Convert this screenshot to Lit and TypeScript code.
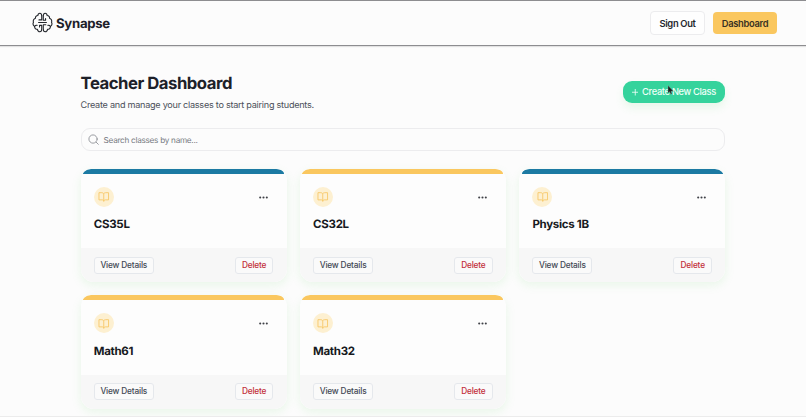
import { LitElement, html, css, svg } from "lit";
import { customElement, property } from "lit/decorators.js";
import { classMap } from "lit/directives/class-map.js";

const brain = svg`
  <path d="M11.100 4.300C11 2.600 10.300 1.500 9 1.500S6.800 2.600 6.700 4C4.800 4 3.700 5.400 4 7.200C2 7.800 1 9.700 1.700 11.800C.8 13.600 1.400 15.600 3 16.500C2.900 18.400 4.200 19.800 6.200 19.800C6.500 21.500 7.600 22.500 9 22.500S11.100 21.300 11.100 19.400V15.300H8.600V17"/>
  <path d="M12.900 4.300C13 2.600 13.700 1.500 15 1.500S17.200 2.600 17.300 4C19.200 4 20.300 5.400 20 7.200C22 7.800 23 9.700 22.300 11.800C23.200 13.600 22.600 15.600 21 16.500C21.100 18.400 19.800 19.800 17.800 19.800C17.500 21.500 16.400 22.500 15 22.500S12.900 21.300 12.900 19.400V14.500H15.800"/>
  <path d="M11.100 4.300V9H8M12.900 4.300V9.500H15.500V7.500M7.500 12H16.500M3 16.500C3.600 15.400 4.700 15 5.800 15.300M21 16.500C20.400 15.400 19.300 15 18.200 15.300"/>`;

@customElement("class-card")
export class ClassCard extends LitElement {
  @property() name = "";
  @property() tone = "gold";

  static styles = css`
    :host { display: block; text-rendering: geometricPrecision; }
    .card {
      height: 113.300px; border-radius: 10px 10px 13px 13px; overflow: hidden; background: #fdfdfd;
      display: flex; flex-direction: column; box-sizing: border-box;
    }
    .shadow { border-radius: 13px; box-shadow: 0 3px 8px 1px rgba(125, 215, 125, 0.130); }
    .bar { height: 4.600px; flex: none; margin: 0 2.600px; border-radius: 8px 8px 0 0 / 4.600px 4.600px 0 0; background: #fac75f; }
    .bar.blue { background: #1c7aa3; }
    .body { flex: 1; padding: 13.300px 13.200px 0; }
    .top { display: flex; justify-content: space-between; align-items: center; height: 20px; padding-right: 5.800px; }
    .badge { width: 20px; height: 20px; border-radius: 50%; background: #fdf0d1; display: grid; place-items: center; }
    .badge svg { width: 11.500px; height: 11.500px; fill: none; stroke: #f7c869; stroke-width: 1.900; }
    .dots { width: 9px; height: 3px; margin-top: 1px; fill: #3f4147; }
    .name { margin: 9.400px 0 0; font-size: 11.500px; line-height: 16px; font-weight: 700; letter-spacing: -0.300px; color: #171a22; white-space: nowrap; }
    .foot {
      height: 34px; flex: none; box-sizing: border-box; padding: 0 13.200px; background: #f7f7f7;
      display: flex; align-items: center; justify-content: space-between;
    }
    .btn {
      height: 17px; box-sizing: border-box; border: 1px solid #e5e8ec; border-radius: 3px; background: #fafafa;
      font: 500 8.300px/15px Inter, sans-serif; letter-spacing: -0.180px; color: #434955; padding: 0; text-align: center; white-space: nowrap;
    }
    .view { width: 60px; }
    .del { width: 38.500px; color: #c2303a; }
  `;

  render() {
    return html`<div class="shadow"><article class="card">
      <div class=${classMap({ bar: true, blue: this.tone === "blue" })}></div>
      <div class="body">
        <div class="top">
          <span class="badge"><svg viewBox="0 0 24 24"><path d="M12 5.500C11 4.400 9.800 3.500 8 3.500H2V18.500H8.500C10.500 18.500 12 19.500 12 21.500C12 19.500 13.500 18.500 15.500 18.500H22V3.500H16C14.200 3.500 13 4.400 12 5.500V21.500"/></svg></span>
          <svg class="dots" viewBox="0 0 9 3"><circle cx="1.200" cy="1.500" r="1.050"/><circle cx="4.500" cy="1.500" r="1.050"/><circle cx="7.800" cy="1.500" r="1.050"/></svg>
        </div>
        <h2 class="name">${this.name}</h2>
      </div>
      <div class="foot"><button class="btn view">View Details</button><button class="btn del">Delete</button></div>
    </article></div>`;
  }
}

@customElement("app-root")
export class AppRoot extends LitElement {
  private classes = [
    { name: "CS35L", tone: "blue" },
    { name: "CS32L", tone: "gold" },
    { name: "Physics 1B", tone: "blue" },
    { name: "Math61", tone: "gold" },
    { name: "Math32", tone: "gold" },
  ];

  static styles = css`
    :host {
      display: block; position: relative; box-sizing: border-box; height: 417px; overflow: hidden;
      background: #fcfcfc; font-family: Inter, sans-serif; color: #1d2129; text-rendering: geometricPrecision;
    }
    .edge { position: absolute; left: 0; right: 0; bottom: 0; height: 1px; background: #ececec; }
    header {
      height: 46px; box-sizing: border-box; border-top: 1px solid #8d8d90; border-bottom: 1px solid #8d8d90;
      box-shadow: 0 1px 1px rgba(0, 0, 0, 0.100); padding: 0 29px 0 32px;
      display: flex; align-items: center; justify-content: space-between;
    }
    .brand { display: flex; align-items: center; gap: 3px; font-size: 13.200px; font-weight: 700; letter-spacing: -0.300px; }
    .brand span { padding-top: 1.500px; }
    .brand svg { width: 21px; height: 21px; margin-top: -1px; fill: none; stroke: #24272d; stroke-width: 1.250; stroke-linecap: round; stroke-linejoin: round; }
    .nav { display: flex; gap: 8px; align-items: center; }
    .nav button { font: 600 9.400px/20px Inter, sans-serif; letter-spacing: -0.350px; color: #24272d; padding: 1px 0 0; box-sizing: border-box; white-space: nowrap; }
    .nav .out { width: 55px; height: 24px; border: 1px solid #ececee; border-radius: 4px; background: #fefefe; }
    .nav .dash { width: 64px; height: 22px; border: 0; border-radius: 4px; background: #fac75f; color: #3a3223; }
    main { padding: 0 80.900px 0 80.600px; }
    .head { height: 82.300px; display: flex; justify-content: space-between; }
    h1 { margin: 27.300px 0 0; font-size: 16.700px; line-height: 22px; font-weight: 700; letter-spacing: -0.480px; white-space: nowrap; }
    .sub { margin: 4px 0 0; font-size: 9.100px; line-height: 14px; letter-spacing: -0.260px; color: #4a4f59; white-space: nowrap; }
    .create {
      position: relative; margin-top: 34.700px; width: 102.500px; height: 22.500px; border: 0; border-radius: 9px; padding: 0;
      background: #35d39c; color: #effff8; font: 500 9.300px/22px Inter, sans-serif; letter-spacing: -0.330px; white-space: nowrap;
      display: flex; align-items: center; justify-content: center; gap: 3.800px; box-shadow: 0 5px 9px rgba(90, 210, 110, 0.120);
    }
    .create .plus { width: 6.500px; height: 6.500px; margin-top: 1px; stroke: #effff8; stroke-width: 0.900; }
    .cursor { position: absolute; left: 44.500px; top: 4.500px; width: 7px; height: 10px; }
    .search {
      height: 23px; box-sizing: border-box; border: 1px solid #ececee; border-radius: 9px; background: #fcfcfc;
      display: flex; align-items: center; gap: 5px; padding-left: 6px; font-size: 8.200px; letter-spacing: -0.280px; color: #777b82;
    }
    .search svg { width: 11px; height: 11px; fill: none; stroke: #85888e; stroke-width: 1.800; stroke-linecap: round; }
    .grid { margin-top: 17.700px; display: grid; grid-template-columns: repeat(3, 1fr); gap: 13.400px; row-gap: 13.200px; }
  `;

  render() {
    return html`
      <header>
        <div class="brand"><svg viewBox="0 0 24 24">${brain}</svg><span>Synapse</span></div>
        <div class="nav"><button class="out">Sign Out</button><button class="dash">Dashboard</button></div>
      </header>
      <main>
        <div class="head">
          <div><h1>Teacher Dashboard</h1><p class="sub">Create and manage your classes to start pairing students.</p></div>
          <button class="create">
            <svg class="plus" viewBox="0 0 7 7"><path d="M3.500 0V7M0 3.500H7"/></svg><span>Create New Class</span>
            <svg class="cursor" viewBox="0 0 7 10"><path d="M1 .5V8.200L2.700 6.700L3.800 9.300L5 8.800L4 6.300H6.500Z" fill="#17201d" stroke="#aab8b2" stroke-width=".35"/></svg>
          </button>
        </div>
        <div class="search"><svg viewBox="0 0 24 24"><circle cx="11" cy="11" r="9"/><path d="M18 18L22.500 22.500"/></svg><span>Search classes by name...</span></div>
        <div class="grid">${this.classes.map((c) => html`<class-card .name=${c.name} .tone=${c.tone}></class-card>`)}</div>
      </main>
      <div class="edge"></div>`;
  }
}
